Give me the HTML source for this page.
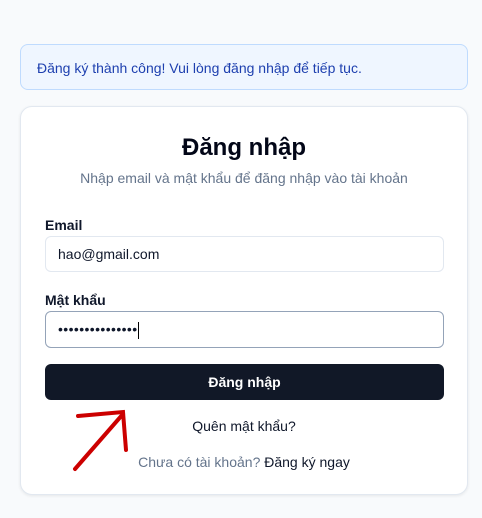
<!DOCTYPE html>
<html><head><meta charset="utf-8"><style>
*{box-sizing:border-box;margin:0;padding:0}
body{width:482px;height:518px;background:#f8fafc;font-family:"Liberation Sans",sans-serif;position:relative;overflow:hidden}
.alert{position:absolute;left:20px;top:44px;width:448px;height:46px;background:#eff6ff;border:1px solid #bfdbfe;border-radius:8px;color:#1e40af;font-size:14px;padding:15px 0 0 16px}
.card{position:absolute;left:20px;top:106px;width:448px;height:389px;background:#fff;border:1px solid #e2e8f0;border-radius:12px;box-shadow:0 1px 3px rgba(0,0,0,.08)}
.t{position:absolute;left:0;width:100%;text-align:center}
.lbl{position:absolute;left:24px;font-size:14px;font-weight:bold;color:#0f172a}
.inp{position:absolute;left:24px;width:399px;border:1px solid #e2e8f0;border-radius:6px;font-size:14px;color:#0f172a;padding-left:12px}
</style></head><body>
<div class="alert">Đăng ký thành công! Vui lòng đăng nhập để tiếp tục.</div>
<div class="card">
<div class="t" style="top:27px;font-size:24px;font-weight:bold;color:#020617">Đăng nhập</div>
<div class="t" style="top:63px;font-size:14px;color:#64748b">Nhập email và mật khẩu để đăng nhập vào tài khoản</div>
<div class="lbl" style="top:110px">Email</div>
<div class="inp" style="top:129px;height:36px;line-height:34px">hao@gmail.com</div>
<div class="lbl" style="top:185px">Mật khẩu</div>
<div class="inp" style="top:204px;height:37px;line-height:34px;border-color:#94a3b8;font-size:14px;letter-spacing:0.4px">•••••••••••••••<span style="display:inline-block;width:1px;height:17px;background:#000;vertical-align:middle;margin-left:0"></span></div>
<div style="position:absolute;left:24px;top:257px;width:399px;height:36px;background:#111827;border-radius:6px;color:#fff;font-size:14px;font-weight:bold;text-align:center;line-height:36px">Đăng nhập</div>
<div class="t" style="top:311px;font-size:14px;color:#0f172a">Quên mật khẩu?</div>
<div class="t" style="top:347px;font-size:14px;color:#64748b">Chưa có tài khoản? <span style="color:#0f172a">Đăng ký ngay</span></div>
</div>
<svg width="482" height="518" style="position:absolute;left:0;top:0" fill="none" stroke="#cc0000" stroke-width="4" stroke-linecap="round">
<path d="M75 469 L123 414"/><path d="M78 416 L123 412 L126 450"/>
</svg>
</body></html>
